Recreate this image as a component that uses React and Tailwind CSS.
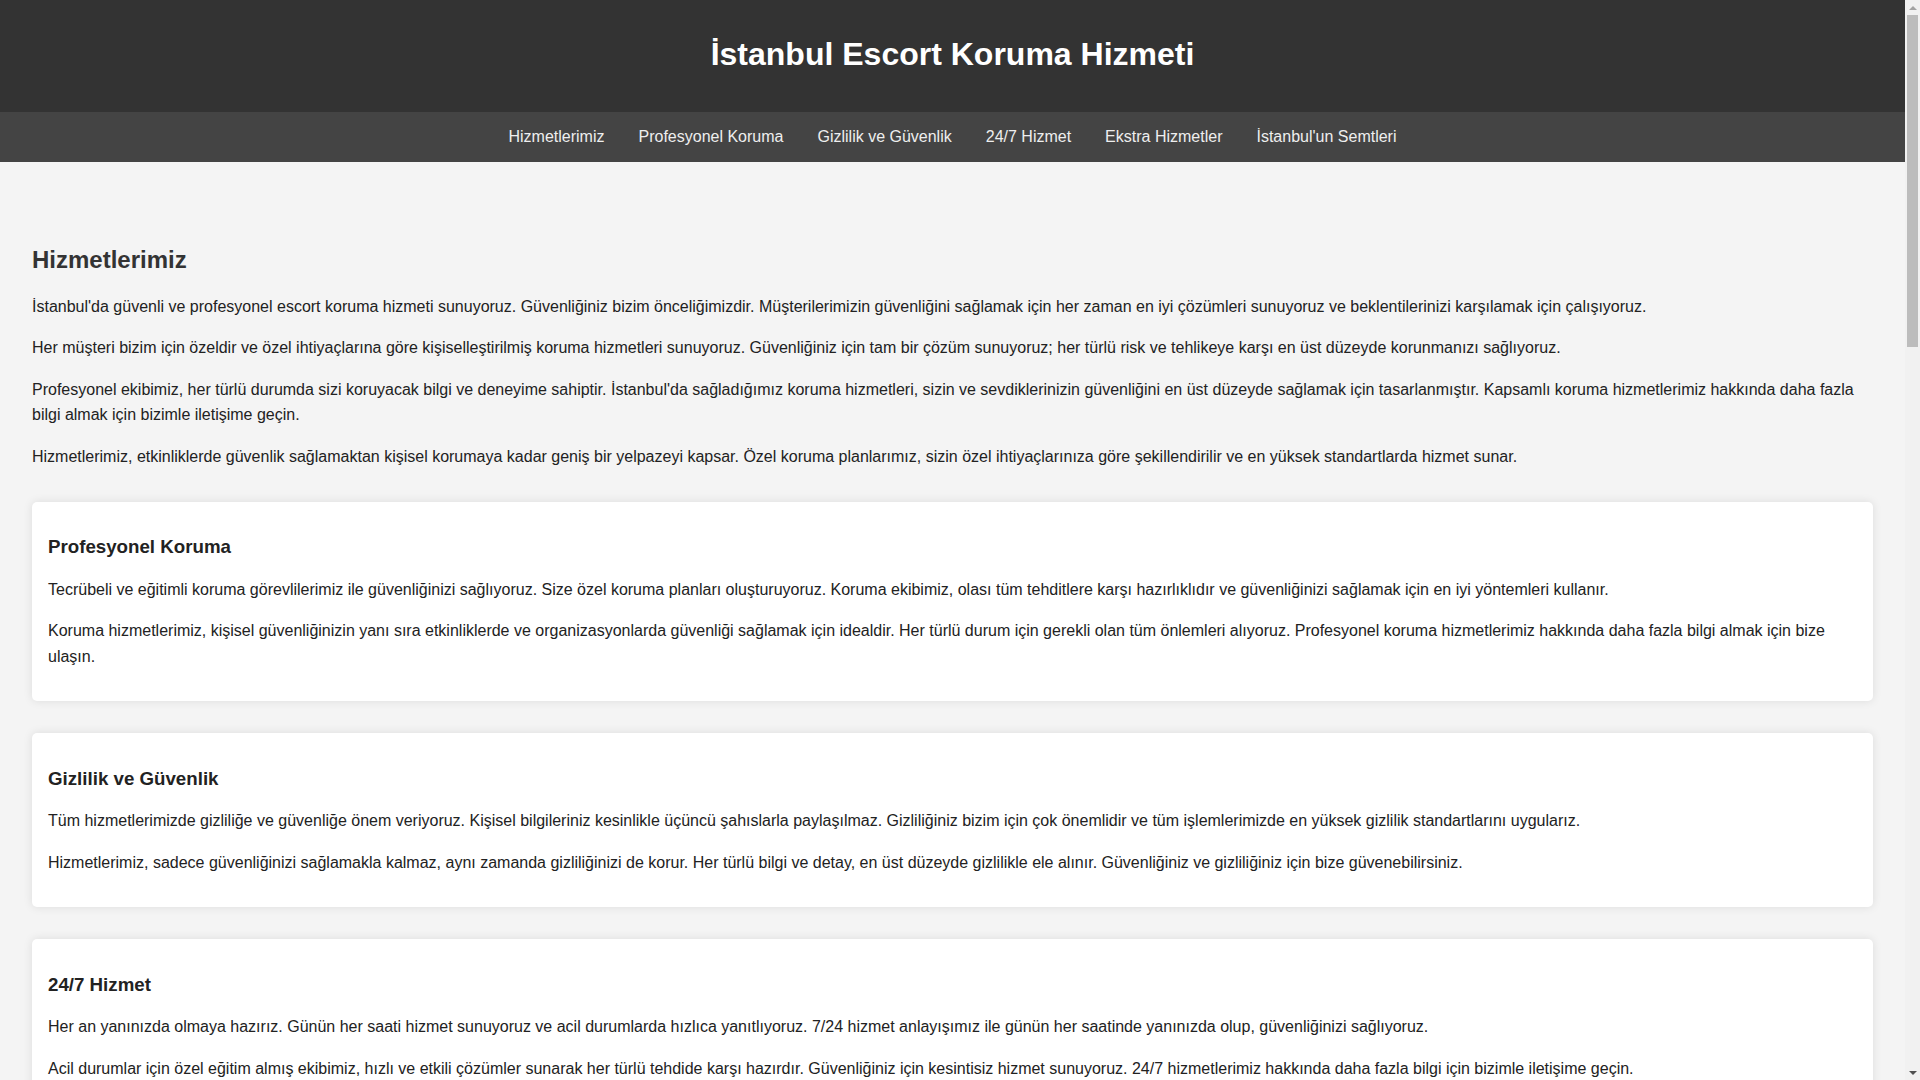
import React from 'react';

const navLinks = [
  'Hizmetlerimiz',
  'Profesyonel Koruma',
  'Gizlilik ve Güvenlik',
  '24/7 Hizmet',
  'Ekstra Hizmetler',
  "İstanbul'un Semtleri",
];

const intro = [
  "İstanbul'da güvenli ve profesyonel escort koruma hizmeti sunuyoruz. Güvenliğiniz bizim önceliğimizdir. Müşterilerimizin güvenliğini sağlamak için her zaman en iyi çözümleri sunuyoruz ve beklentilerinizi karşılamak için çalışıyoruz.",
  'Her müşteri bizim için özeldir ve özel ihtiyaçlarına göre kişiselleştirilmiş koruma hizmetleri sunuyoruz. Güvenliğiniz için tam bir çözüm sunuyoruz; her türlü risk ve tehlikeye karşı en üst düzeyde korunmanızı sağlıyoruz.',
  "Profesyonel ekibimiz, her türlü durumda sizi koruyacak bilgi ve deneyime sahiptir. İstanbul'da sağladığımız koruma hizmetleri, sizin ve sevdiklerinizin güvenliğini en üst düzeyde sağlamak için tasarlanmıştır. Kapsamlı koruma hizmetlerimiz hakkında daha fazla bilgi almak için bizimle iletişime geçin.",
  'Hizmetlerimiz, etkinliklerde güvenlik sağlamaktan kişisel korumaya kadar geniş bir yelpazeyi kapsar. Özel koruma planlarımız, sizin özel ihtiyaçlarınıza göre şekillendirilir ve en yüksek standartlarda hizmet sunar.',
];

const sections = [
  {
    title: 'Profesyonel Koruma',
    body: [
      'Tecrübeli ve eğitimli koruma görevlilerimiz ile güvenliğinizi sağlıyoruz. Size özel koruma planları oluşturuyoruz. Koruma ekibimiz, olası tüm tehditlere karşı hazırlıklıdır ve güvenliğinizi sağlamak için en iyi yöntemleri kullanır.',
      'Koruma hizmetlerimiz, kişisel güvenliğinizin yanı sıra etkinliklerde ve organizasyonlarda güvenliği sağlamak için idealdir. Her türlü durum için gerekli olan tüm önlemleri alıyoruz. Profesyonel koruma hizmetlerimiz hakkında daha fazla bilgi almak için bize ulaşın.',
    ],
  },
  {
    title: 'Gizlilik ve Güvenlik',
    body: [
      'Tüm hizmetlerimizde gizliliğe ve güvenliğe önem veriyoruz. Kişisel bilgileriniz kesinlikle üçüncü şahıslarla paylaşılmaz. Gizliliğiniz bizim için çok önemlidir ve tüm işlemlerimizde en yüksek gizlilik standartlarını uygularız.',
      'Hizmetlerimiz, sadece güvenliğinizi sağlamakla kalmaz, aynı zamanda gizliliğinizi de korur. Her türlü bilgi ve detay, en üst düzeyde gizlilikle ele alınır. Güvenliğiniz ve gizliliğiniz için bize güvenebilirsiniz.',
    ],
  },
  {
    title: '24/7 Hizmet',
    body: [
      'Her an yanınızda olmaya hazırız. Günün her saati hizmet sunuyoruz ve acil durumlarda hızlıca yanıtlıyoruz. 7/24 hizmet anlayışımız ile günün her saatinde yanınızda olup, güvenliğinizi sağlıyoruz.',
      'Acil durumlar için özel eğitim almış ekibimiz, hızlı ve etkili çözümler sunarak her türlü tehdide karşı hazırdır. Güvenliğiniz için kesintisiz hizmet sunuyoruz. 24/7 hizmetlerimiz hakkında daha fazla bilgi için bizimle iletişime geçin.',
    ],
  },
  {
    title: 'Ekstra Hizmetler',
    body: [
      'Koruma hizmetlerimizin yanı sıra ulaşım, refakat ve etkinlik güvenliği gibi ek hizmetler de sunuyoruz. İhtiyaçlarınıza göre esnek çözümler hazırlıyoruz.',
    ],
  },
  {
    title: "İstanbul'un Semtleri",
    body: [
      "İstanbul'un tüm semtlerinde koruma hizmeti veriyoruz. Beşiktaş, Şişli, Kadıköy, Üsküdar, Bakırköy, Sarıyer ve diğer tüm bölgelerde yanınızdayız.",
    ],
  },
];

const Card = ({ title, body }) => (
  <div className="bg-white rounded-[5px] shadow-[0_0_10px_rgba(0,0,0,0.1)] p-4 flex flex-col">
    <h3 className="mt-[18.72px] mb-[18.72px] text-[18.72px] leading-[1.15] font-bold text-[#222]">{title}</h3>
    {body.map((t, i) => (
      <p key={i} className="mb-4 text-base leading-[25.6px] text-[#222]">
        {t}
      </p>
    ))}
  </div>
);

// the reference shows a classic page scrollbar; the headless shot hides real ones
const Scrollbar = () => (
  <div className="fixed top-0 right-0 h-screen w-[15px] bg-[#f1f1f1] flex flex-col items-center">
    <div className="h-[15px] flex items-center justify-center">
      <div className="w-0 h-0 border-l-[4px] border-r-[4px] border-b-[4px] border-l-transparent border-r-transparent border-b-[#a3a3a3]" />
    </div>
    <div className="w-[11px] h-[332px] bg-[#bcbcbc]" />
    <div className="flex-1" />
    <div className="h-[15px] flex items-center justify-center">
      <div className="w-0 h-0 border-l-[4px] border-r-[4px] border-t-[4px] border-l-transparent border-r-transparent border-t-[#505050]" />
    </div>
  </div>
);

export default function App() {
  return (
    <div className="min-h-screen pr-[15px] bg-[#f4f4f4] font-['Liberation_Sans',Arial,sans-serif]">
      <header className="bg-[#333] text-white text-center h-[112px] flex items-center justify-center">
        <h1 className="text-[32px] font-bold leading-[1.15] -mt-[3px]">İstanbul Escort Koruma Hizmeti</h1>
      </header>
      <nav className="bg-[#444] h-[50px] flex items-center justify-center gap-[34px]">
        {navLinks.map((l) => (
          <a key={l} href="#" className="text-[#eee] text-base leading-[1.15]">
            {l}
          </a>
        ))}
      </nav>
      <main className="px-8 pt-[84px] pb-8 flex flex-col">
        <h2 className="text-2xl font-bold leading-[1.15] mb-5 text-[#333]">Hizmetlerimiz</h2>
        <div className="flex flex-col gap-4">
          {intro.map((t, i) => (
            <p key={i} className="text-base leading-[25.6px] text-[#222]">
              {t}
            </p>
          ))}
        </div>
        <div className="flex flex-col gap-8 mt-8">
          {sections.map((s) => (
            <Card key={s.title} {...s} />
          ))}
        </div>
      </main>
      <Scrollbar />
    </div>
  );
}
